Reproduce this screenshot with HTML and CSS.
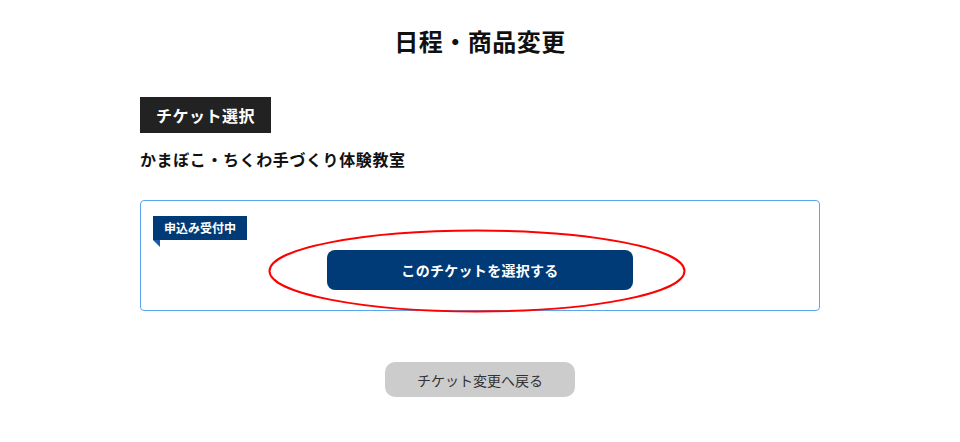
FILE: index.html
```html
<!DOCTYPE html>
<html lang="ja">
<head>
<meta charset="utf-8">
<title>日程・商品変更</title>
<link rel="stylesheet" href="styles.css">
</head>
<body>
<main class="page">
  <h1 class="title">日程・商品変更</h1>
  <div class="section-tag">チケット選択</div>
  <p class="product">かまぼこ・ちくわ手づくり体験教室</p>
  <div class="card">
    <div class="badge">申込み受付中</div>
    <div class="card-action">
      <button class="select-btn" type="button">このチケットを選択する</button>
      <svg class="highlight" width="420" height="86" viewBox="0 0 420 86" aria-hidden="true">
        <ellipse cx="209" cy="42" rx="207.5" ry="40.5" fill="none" stroke="#f00" stroke-width="2"/>
      </svg>
    </div>
  </div>
  <div class="back-row">
    <button class="back-btn" type="button">チケット変更へ戻る</button>
  </div>
</main>
</body>
</html>
```

FILE: styles.css
```css
* { box-sizing: border-box; }
html, body { margin: 0; padding: 0; background: #fff; }
body {
  font-family: "Noto Sans CJK JP", "Noto Sans", sans-serif;
  color: #222;
}
.page {
  width: 680px;
  margin: 0 auto;
  padding-top: 24px;
}
.title {
  margin: 0;
  font-size: 24px;
  line-height: 34px;
  font-weight: 700;
  text-align: center;
  color: #111;
  letter-spacing: 0.5px;
}
.section-tag {
  width: fit-content;
  margin-top: 39px;
  height: 36px;
  line-height: 36px;
  padding: 0 16px;
  background: #222;
  color: #fff;
  font-size: 16px;
  font-weight: 700;
  letter-spacing: 0.5px;
}
.product {
  margin: 14px 0 0;
  font-size: 16px;
  line-height: 24px;
  font-weight: 700;
  color: #111;
  letter-spacing: 0.6px;
}
.card {
  margin-top: 29px;
  border: 1px solid #5aa6ee;
  border-radius: 4px;
  padding: 15px 12px 20px;
  position: relative;
}
.badge {
  width: fit-content;
  position: relative;
  height: 24px;
  line-height: 24px;
  padding: 0 11px;
  background: #013b77;
  color: #fff;
  font-size: 12px;
  font-weight: 700;
}
.badge::after {
  content: "";
  position: absolute;
  left: 0;
  top: 24px;
  border-top: 7px solid #1d5aa5;
  border-left: 7px solid transparent;
}
.card-action {
  margin-top: 10px;
  display: flex;
  justify-content: center;
  position: relative;
}
.select-btn {
  width: 306px;
  height: 40px;
  border: none;
  border-radius: 8px;
  background: #013b77;
  color: #fff;
  font-family: inherit;
  font-size: 14px;
  font-weight: 700;
  letter-spacing: 0.3px;
}
.highlight {
  position: absolute;
  left: 115px;
  top: -21px;
}
.back-row {
  display: flex;
  justify-content: center;
  margin-top: 51px;
}
.back-btn {
  width: 190px;
  height: 35px;
  border: none;
  border-radius: 10px;
  background: #cccccc;
  color: #333;
  font-family: inherit;
  font-size: 14px;
  font-weight: 400;
}
```
